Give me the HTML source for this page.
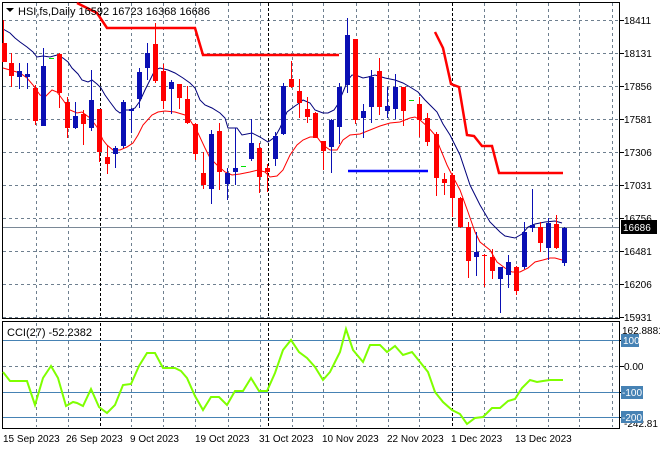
<!DOCTYPE html>
<html><head><meta charset="utf-8"><style>
html,body{margin:0;padding:0;background:#fff;}
svg{display:block;font-family:"Liberation Sans",sans-serif;}
</style></head><body>
<svg width="660" height="450" viewBox="0 0 660 450" xmlns="http://www.w3.org/2000/svg">
<rect width="660" height="450" fill="#fff"/>
<!-- grid -->
<g stroke="#6e7f8f" stroke-width="1" stroke-dasharray="3,3" shape-rendering="crispEdges">
<path d="M3 20.5H619M3 53.5H619M3 86.5H619M3 119.5H619M3 152.5H619M3 185.5H619M3 218.5H619M3 251.5H619M3 284.5H619M3 317.5H619"/>
<path d="M36.5 3V318M68.5 3V318M131.5 3V318M163.5 3V318M195.5 3V318M228.5 3V318M260.5 3V318M292.5 3V318M323.5 3V318M356.5 3V318M388.5 3V318M419.5 3V318M484.5 3V318M516.5 3V318M548.5 3V318M579.5 3V318M612.5 3V318"/>
<path d="M36.5 323V427M68.5 323V427M131.5 323V427M163.5 323V427M195.5 323V427M228.5 323V427M260.5 323V427M292.5 323V427M323.5 323V427M356.5 323V427M388.5 323V427M419.5 323V427M484.5 323V427M516.5 323V427M548.5 323V427M579.5 323V427M612.5 323V427"/>
<path d="M3 366.5H619"/>
</g>
<g stroke="#000" stroke-width="1" stroke-dasharray="3,2" shape-rendering="crispEdges">
<path d="M100.5 3V318M268.5 3V318M452.5 3V318M100.5 323V427M268.5 323V427M452.5 323V427"/>
</g>
<!-- price line -->
<path d="M3 227.5H619" stroke="#7a8896" stroke-width="1" shape-rendering="crispEdges"/>
<!-- CCI levels -->
<g stroke="#4682b4" stroke-width="1" shape-rendering="crispEdges">
<path d="M3 340.5H619M3 392.5H619M3 417.5H619"/>
</g>
<!-- frames -->
<g fill="none" stroke="#000" stroke-width="1" shape-rendering="crispEdges">
<rect x="2.5" y="2.5" width="617" height="316"/>
<rect x="2.5" y="321.5" width="617" height="107"/>
<path d="M620 20.5h4M620 53.5h4M620 86.5h4M620 119.5h4M620 152.5h4M620 185.5h4M620 218.5h4M620 251.5h4M620 284.5h4M620 317.5h4M620 340.5h4M620 366.5h4M620 392.5h4M620 417.5h4"/>
</g>
<!-- thick red step line -->
<polyline fill="none" stroke="#ff0000" stroke-width="2.5" points="77,3 97,13 107,28 195,28 203,55 339,55"/>
<polyline fill="none" stroke="#ff0000" stroke-width="2.5" points="435,32 443,48 451,84 459,87 467,135 474,136 482,146 492,146 499,173 563,173"/>
<!-- blue horizontal -->
<path d="M348 171H428" stroke="#0000ff" stroke-width="2.5"/>
<!-- navy MA -->
<polyline fill="none" stroke="#00007a" stroke-width="1" points="3,29 10,33 15,38 20,42 27,47 33,52 37,57 43,56 50,57 57,55 63,58 68,62 72,68 78,74 82,80 88,82 92,80 97,84 101,88 105,95 110,102 116,110 120,113 125,110 130,110 135,108 140,101 145,90 150,80 155,70 160,68 168,70 175,73 183,78 190,83 195,88 200,100 205,105 212,108 220,113 225,118 228,128 237,128 242,135 252,133 260,137 268,142 275,137 280,128 287,112 295,106 298,104 303,100 310,103 315,110 323,113 328,113 334,110 338,104 343,92 348,80 352,75 358,76 363,78 368,77 375,75 385,78 395,80 403,83 410,87 418,92 425,100 430,105 437,112 443,124 450,135 460,155 470,185 480,205 490,222 500,232 505,236 515,238 522,234 528,227 535,224 545,222 555,221 562,223"/>
<!-- red MA -->
<polyline fill="none" stroke="#ff0000" stroke-width="1" points="3,68 10,70 20,73 27,78 33,85 40,95 45,97 52,90 57,92 63,100 70,110 77,113 82,112 90,118 97,127 103,140 107,145 113,150 120,150 127,147 133,143 138,135 143,125 152,115 158,112 165,111 175,112 185,115 190,120 198,133 205,148 210,158 217,165 225,172 232,175 240,174 250,172 258,170 265,172 270,177 277,176 283,170 290,155 297,145 303,140 310,137 317,137 323,145 330,150 337,150 343,140 350,135 360,134 370,130 380,126 390,123 400,122 410,118 415,117 420,120 428,127 435,135 440,148 447,165 452,175 460,190 468,212 475,232 480,242 490,250 497,262 505,268 512,272 520,272 528,268 535,262 543,260 550,258 555,258 562,260"/>
<!-- candles red -->
<g fill="#ff0000" stroke="none" shape-rendering="crispEdges">
<rect x="3" y="20" width="1" height="42"/><rect x="2" y="43" width="5" height="19"/>
<rect x="11" y="53" width="1" height="34"/><rect x="9" y="63" width="5" height="13"/>
<rect x="35" y="85" width="1" height="40"/><rect x="33" y="88" width="5" height="33"/>
<rect x="59" y="53" width="1" height="55"/><rect x="57" y="54" width="5" height="39"/>
<rect x="67" y="97" width="1" height="41"/><rect x="65" y="102" width="5" height="26"/>
<rect x="83" y="110" width="1" height="35"/><rect x="81" y="114" width="5" height="10"/>
<rect x="99" y="109" width="1" height="53"/><rect x="97" y="109" width="5" height="43"/>
<rect x="107" y="145" width="1" height="29"/><rect x="105" y="157" width="5" height="7"/>
<rect x="155" y="23" width="1" height="60"/><rect x="153" y="44" width="5" height="37"/>
<rect x="163" y="64" width="1" height="45"/><rect x="161" y="71" width="5" height="30"/>
<rect x="179" y="84" width="1" height="25"/><rect x="177" y="84" width="5" height="14"/>
<rect x="187" y="86" width="1" height="38"/><rect x="185" y="99" width="5" height="24"/>
<rect x="195" y="123" width="1" height="37"/><rect x="193" y="124" width="5" height="30"/>
<rect x="203" y="152" width="1" height="37"/><rect x="201" y="173" width="5" height="12"/>
<rect x="219" y="123" width="1" height="67"/><rect x="217" y="131" width="5" height="41"/>
<rect x="259" y="143" width="1" height="50"/><rect x="257" y="148" width="5" height="29"/>
<rect x="267" y="164" width="1" height="28"/><rect x="265" y="168" width="5" height="4"/>
<rect x="291" y="61" width="1" height="27"/><rect x="289" y="79" width="5" height="8"/>
<rect x="299" y="79" width="1" height="39"/><rect x="297" y="91" width="5" height="12"/>
<rect x="307" y="97" width="1" height="26"/><rect x="305" y="109" width="5" height="8"/>
<rect x="315" y="112" width="1" height="26"/><rect x="313" y="113" width="5" height="25"/>
<rect x="323" y="141" width="1" height="29"/><rect x="321" y="141" width="5" height="10"/>
<rect x="355" y="39" width="1" height="85"/><rect x="353" y="39" width="5" height="81"/>
<rect x="379" y="58" width="1" height="57"/><rect x="377" y="71" width="5" height="36"/>
<rect x="403" y="87" width="1" height="39"/><rect x="401" y="87" width="5" height="24"/>
<rect x="419" y="97" width="1" height="40"/><rect x="417" y="104" width="5" height="16"/>
<rect x="427" y="113" width="1" height="33"/><rect x="425" y="118" width="5" height="24"/>
<rect x="436" y="132" width="1" height="64"/><rect x="434" y="134" width="5" height="44"/>
<rect x="444" y="173" width="1" height="22"/><rect x="442" y="179" width="5" height="4"/>
<rect x="452" y="173" width="1" height="44"/><rect x="450" y="175" width="5" height="23"/>
<rect x="460" y="197" width="1" height="31"/><rect x="458" y="198" width="5" height="29"/>
<rect x="468" y="222" width="1" height="56"/><rect x="466" y="227" width="5" height="34"/>
<rect x="484" y="254" width="1" height="33"/><rect x="482" y="255" width="5" height="1"/>
<rect x="492" y="249" width="1" height="30"/><rect x="490" y="257" width="5" height="14"/>
<rect x="516" y="266" width="1" height="29"/><rect x="514" y="267" width="5" height="24"/>
<rect x="540" y="222" width="1" height="30"/><rect x="538" y="227" width="5" height="16"/>
<rect x="556" y="215" width="1" height="34"/><rect x="554" y="224" width="5" height="24"/>
</g>
<!-- candles blue -->
<g fill="#0a0fb4" stroke="none" shape-rendering="crispEdges">
<rect x="19" y="63" width="1" height="26"/><rect x="17" y="71" width="5" height="6"/>
<rect x="27" y="63" width="1" height="26"/><rect x="25" y="74" width="5" height="3"/>
<rect x="43" y="48" width="1" height="78"/><rect x="41" y="66" width="5" height="60"/>
<rect x="75" y="102" width="1" height="27"/><rect x="73" y="116" width="5" height="12"/>
<rect x="91" y="70" width="1" height="61"/><rect x="89" y="100" width="5" height="28"/>
<rect x="115" y="146" width="1" height="22"/><rect x="113" y="148" width="5" height="6"/>
<rect x="123" y="100" width="1" height="48"/><rect x="121" y="102" width="5" height="44"/>
<rect x="131" y="108" width="1" height="25"/><rect x="129" y="109" width="5" height="2"/>
<rect x="139" y="68" width="1" height="40"/><rect x="137" y="72" width="5" height="27"/>
<rect x="147" y="43" width="1" height="37"/><rect x="145" y="53" width="5" height="15"/>
<rect x="171" y="80" width="1" height="34"/><rect x="169" y="82" width="5" height="7"/>
<rect x="211" y="130" width="1" height="74"/><rect x="209" y="134" width="5" height="55"/>
<rect x="227" y="168" width="1" height="32"/><rect x="225" y="173" width="5" height="11"/>
<rect x="235" y="128" width="1" height="57"/><rect x="233" y="168" width="5" height="4"/>
<rect x="251" y="119" width="1" height="42"/><rect x="249" y="143" width="5" height="16"/>
<rect x="275" y="132" width="1" height="34"/><rect x="273" y="136" width="5" height="23"/>
<rect x="283" y="83" width="1" height="52"/><rect x="281" y="86" width="5" height="48"/>
<rect x="331" y="119" width="1" height="54"/><rect x="329" y="120" width="5" height="27"/>
<rect x="339" y="83" width="1" height="61"/><rect x="337" y="87" width="5" height="40"/>
<rect x="347" y="18" width="1" height="75"/><rect x="345" y="35" width="5" height="50"/>
<rect x="363" y="104" width="1" height="34"/><rect x="361" y="111" width="5" height="7"/>
<rect x="371" y="70" width="1" height="53"/><rect x="369" y="77" width="5" height="30"/>
<rect x="387" y="87" width="1" height="31"/><rect x="385" y="106" width="5" height="5"/>
<rect x="395" y="74" width="1" height="45"/><rect x="393" y="87" width="5" height="22"/>
<rect x="476" y="232" width="1" height="44"/><rect x="474" y="252" width="5" height="5"/>
<rect x="500" y="267" width="1" height="46"/><rect x="498" y="267" width="5" height="12"/>
<rect x="508" y="255" width="1" height="33"/><rect x="506" y="262" width="5" height="13"/>
<rect x="524" y="222" width="1" height="47"/><rect x="522" y="232" width="5" height="35"/>
<rect x="532" y="189" width="1" height="43"/><rect x="530" y="225" width="5" height="3"/>
<rect x="548" y="218" width="1" height="42"/><rect x="546" y="223" width="5" height="25"/>
<rect x="564" y="227" width="1" height="39"/><rect x="562" y="228" width="5" height="35"/>
</g>
<!-- doji -->
<g fill="#00e000"><rect x="49" y="58" width="5" height="1"/><rect x="241" y="166" width="5" height="1"/><rect x="409" y="100" width="5" height="1"/></g>
<!-- CCI -->
<polyline fill="none" stroke="#7fff00" stroke-width="2" points="3,372 10,381 27,381 35,405 43,378 51,366 58,378 66,406 73,402 77,403 83,406 91,389 99,407 107,413 115,405 123,385 131,384 139,366 147,353 155,353 163,368 175,368 181,371 187,378 195,396 203,410 211,397 219,397 227,405 235,391 243,391 251,378 259,391 267,391 275,373 283,350 291,340 299,352 307,358 315,367 323,380 330,372 340,352 346,329 353,350 363,362 370,345 380,345 387,352 395,346 403,355 412,352 420,362 428,372 435,392 443,402 452,410 460,414 467,424 475,418 483,417 492,408 500,408 508,401 515,399 522,388 530,380 537,382 543,381 550,380 563,380"/>
<!-- text -->
<path d="M6 8h8l-4 4z" fill="#000"/>
<text x="18" y="15" font-size="11" fill="#000">HSI,fs,Daily  16592 16723 16368 16686</text>
<text x="7" y="336" font-size="11" fill="#000">CCI(27) -52.2382</text>
<g font-size="10" fill="#000">
<text x="624" y="24">18411</text><text x="624" y="57">18131</text><text x="624" y="90">17856</text><text x="624" y="123">17581</text><text x="624" y="156">17306</text><text x="624" y="189">17031</text><text x="624" y="222">16756</text><text x="624" y="255">16481</text><text x="624" y="288">16206</text><text x="624" y="321">15931</text>
<text x="622" y="334">162.8881</text><text x="624" y="370">0.00</text><text x="624" y="427">-242.81</text>
</g>
<rect x="621" y="220" width="36" height="14" fill="#000"/>
<text x="623" y="231" font-size="10" fill="#fff">16686</text>
<g fill="#4682b4"><rect x="621" y="334" width="18" height="13"/><rect x="621" y="386" width="22" height="13"/><rect x="621" y="411" width="22" height="12"/></g>
<g font-size="10" fill="#fff"><text x="623" y="344">100</text><text x="622" y="396">-100</text><text x="622" y="421">-200</text></g>
<g font-size="10" fill="#000">
<text x="3" y="442">15 Sep 2023</text><text x="66" y="442">26 Sep 2023</text><text x="130" y="442">9 Oct 2023</text><text x="195" y="442">19 Oct 2023</text><text x="259" y="442">31 Oct 2023</text><text x="322" y="442">10 Nov 2023</text><text x="387" y="442">22 Nov 2023</text><text x="451" y="442">1 Dec 2023</text><text x="515" y="442">13 Dec 2023</text>
</g>
</svg>
</body></html>
